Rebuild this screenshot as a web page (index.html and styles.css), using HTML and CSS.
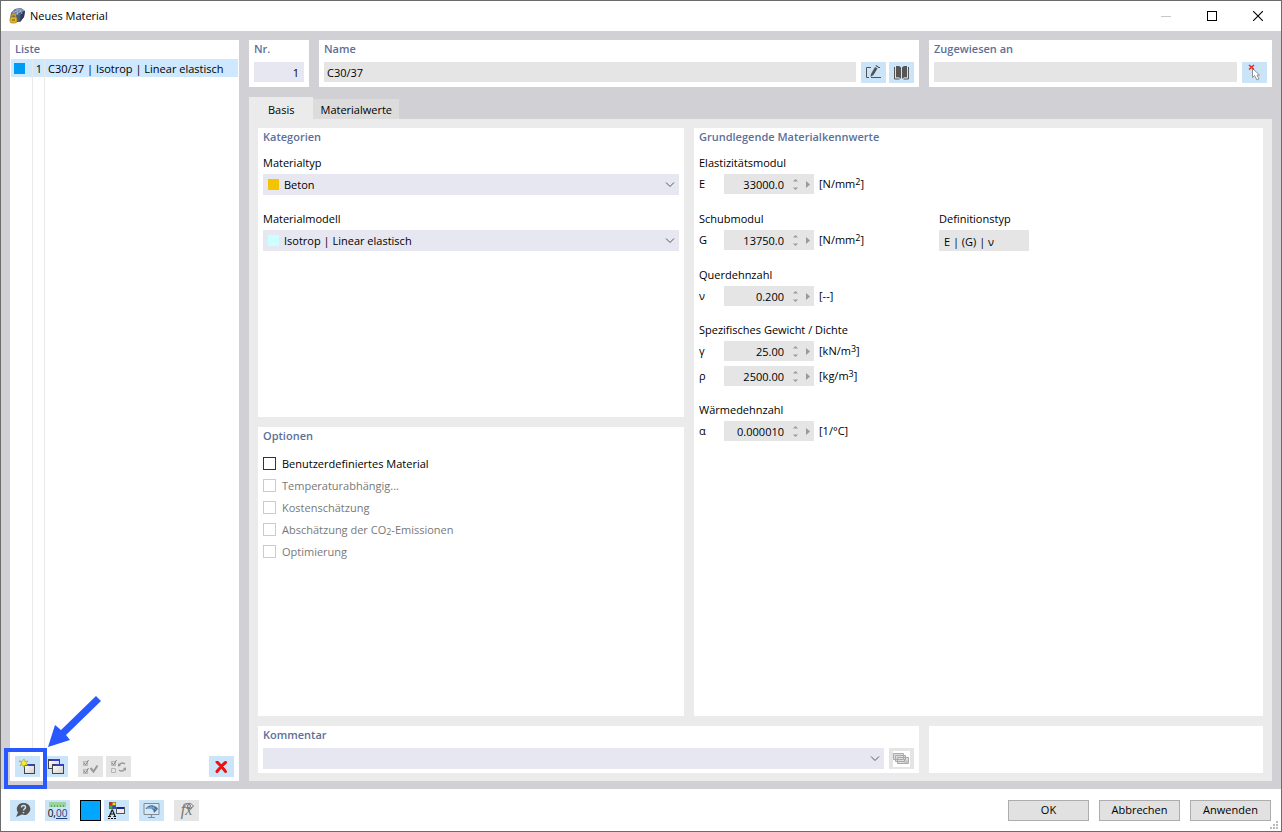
FILE: index.html
```html
<!DOCTYPE html>
<html lang="de">
<head>
<meta charset="utf-8">
<title>Neues Material</title>
<link rel="stylesheet" href="styles.css">
</head>
<body>
<div class="window">
  <header class="titlebar">
    <svg class="app-icon" width="17" height="16" viewBox="0 0 17 16">
      <path d="M2 5 L6 1 L12 0 L16 3 L15 9 L11 14 L6 14 L1 10Z" fill="#4b5c79"/>
      <path d="M6 1 L12 0 L16 3 L10 4Z" fill="#8298bb"/>
      <path d="M2 5 L6 1 L10 4 L5 8Z" fill="#6a82a6"/>
      <path d="M12 5 L16 3 L15 9 L11 14Z" fill="#2f3a52"/>
      <path d="M4 5 L9 2 M6 7 L12 3 M8 3 L9 7 M11 2 L13 6" stroke="#b4c5df" stroke-width=".8" fill="none"/>
      <path d="M2.500 10V8.500a2 2 0 0 1 4 0V10" fill="none" stroke="#c99a20" stroke-width="1.500"/>
      <rect x="1" y="9" width="7" height="6" rx="2" fill="#e3b52a" stroke="#a57c12" stroke-width=".7"/>
      <path d="M3 12h3" stroke="#69500b"/>
    </svg>
    <h1 class="window-title">Neues Material</h1>
    <div class="window-controls">
      <button class="window-button" type="button" aria-label="Minimieren" disabled><svg width="10" height="10" viewBox="0 0 10 10"><path d="M0 5.500h10" stroke="#c8c8c8"/></svg></button>
      <button class="window-button" type="button" aria-label="Maximieren"><svg width="10" height="10" viewBox="0 0 10 10"><rect x=".5" y=".5" width="9" height="9" fill="none" stroke="#000"/></svg></button>
      <button class="window-button" type="button" aria-label="Schließen"><svg width="10" height="10" viewBox="0 0 10 10"><path d="M0 0l10 10M10 0L0 10" stroke="#000" stroke-width="1.100"/></svg></button>
    </div>
  </header>

  <main class="workspace">
    <section class="list-panel">
      <h2 class="card-title">Liste</h2>
      <div class="list-body">
        <div class="list-row">
          <span class="list-color"><span class="swatch swatch-blue"></span></span>
          <span class="list-number">1</span>
          <span class="list-name">C30/37 | Isotrop | Linear elastisch</span>
        </div>
        <div class="list-space"><span class="list-line"></span><span class="list-line"></span></div>
      </div>
      <div class="list-toolbar">
        <button class="tool" type="button" aria-label="Neu">
          <svg width="17" height="17" viewBox="0 0 17 17"><defs><linearGradient id="pane" x1="0" y1="0" x2="1" y2="1"><stop offset="0" stop-color="#fff"/><stop offset="1" stop-color="#d0d0d0"/></linearGradient></defs><rect x="5.500" y="6.500" width="10" height="9" fill="url(#pane)" stroke="#444"/><path d="M5 6h11v2H5z" fill="#444"/><path d="M8 7h7" stroke="#3344ee" stroke-width="1.600"/><path d="M5 1l1 2.500 3-.5-2 2 2 2.500-3-.5-1 2.500-1-2.500-3 .5 2-2.500-3-2 3 .5z" fill="#f2f020" stroke="#8a8a30" stroke-width=".5"/></svg>
        </button>
        <button class="tool" type="button" aria-label="Kopieren">
          <svg width="17" height="17" viewBox="0 0 17 17"><rect x="1.500" y="1.500" width="11" height="9" fill="url(#pane)" stroke="#444"/><path d="M1 1h12v2H1z" fill="#444"/><path d="M5 2h7" stroke="#3344ee" stroke-width="1.600"/><rect x="5.500" y="6.500" width="11" height="9" fill="url(#pane)" stroke="#444"/><path d="M5 6h12v2H5z" fill="#444"/><path d="M9 7h7" stroke="#3344ee" stroke-width="1.600"/></svg>
        </button>
        <button class="tool tool-off tool-spaced" type="button" aria-label="Alle auswählen" disabled>
          <svg width="17" height="16" viewBox="0 0 17 16" fill="none" stroke="#888"><path d="M1.500 2.500h4v4h-4zM1.500 10.500h4v4h-4z" stroke="#b5b5b5"/><path d="M2 3.500l1.500 2.500L6.500 1M2 11.500l1.500 2.500L6.500 9"/><path d="M8.500 9l3 3.500 4-6" stroke="#999" stroke-width="2"/></svg>
        </button>
        <button class="tool tool-off" type="button" aria-label="Auswahl umkehren" disabled>
          <svg width="17" height="16" viewBox="0 0 17 16" fill="none" stroke="#888"><path d="M1.500 2.500h4v4h-4zM1.500 9.500h4v4h-4z" stroke="#b5b5b5"/><path d="M2 3.500l1.500 2.500L6.500 1"/><path d="M9 6c2-2.500 4-2.500 6-1M15 10c-2 2.500-4 2.500-6 1" stroke="#999" stroke-width="1.300"/><path d="M8 7.500V4l3 3zM16 8.500V12l-3-3z" fill="#999" stroke="none"/></svg>
        </button>
        <button class="tool tool-last" type="button" aria-label="Löschen">
          <svg width="13" height="12" viewBox="0 0 13 12"><path d="M2 1c3 3 6 6 8.500 9.500M10.500 1.500c-4 3-6 6-8.500 9" fill="none" stroke="#f01010" stroke-width="3" stroke-linecap="round"/></svg>
        </button>
      </div>
      <svg class="callout" width="98" height="96" viewBox="0 0 98 96" aria-hidden="true">
        <rect x="2" y="56" width="39" height="37" fill="none" stroke="#2958ff" stroke-width="4"/>
        <path d="M92 2l5 5-35 34 4 5-22 7 7-22 6 5z" fill="#2958ff"/>
      </svg>
    </section>

    <div class="detail">
      <div class="header-cards">
        <section class="card">
          <label class="card-title" for="nr">Nr.</label>
          <input class="field field-edit field-right" id="nr" value="1">
        </section>
        <section class="card">
          <label class="card-title" for="name">Name</label>
          <div class="field-line">
            <input class="field" id="name" value="C30/37" readonly>
            <button class="tool" type="button" aria-label="Name bearbeiten">
              <svg width="17" height="15" viewBox="0 0 17 15" fill="none" stroke="#555"><path d="M6 2.500H1.500v10H4M6 12.500h10M13 2.500h2"/><path d="M5.500 12l.5-3 4-7 2.500 1.500-4 6.500z" fill="#555" stroke="none"/><path d="M10.500 1l.500-1 2.500 1.500-.5 1z" fill="#555" stroke="none"/></svg>
            </button>
            <button class="tool" type="button" aria-label="Bibliothek">
              <svg width="17" height="14" viewBox="0 0 17 14"><path d="M3 0c2-.3 4 0 5 1.500V13c-1-1.500-3-2-5-1.500zM9 1.500c1-1.500 3-1.800 5-1.500v11.500c-2-.5-4 0-5 1.500z" fill="#555"/><path d="M1.500 1v12h5M15.500 1v12h-5" fill="none" stroke="#555"/></svg>
            </button>
          </div>
        </section>
        <section class="card">
          <label class="card-title" for="assigned">Zugewiesen an</label>
          <div class="field-line">
            <input class="field" id="assigned" value="" readonly>
            <button class="tool" type="button" aria-label="Auswählen">
              <svg width="15" height="17" viewBox="0 0 15 17"><path d="M5.500 4.500v9l2-2 2.500 4.500 2-1-2-4h2.500z" fill="#fff" stroke="#888" stroke-width=".9"/><path d="M2 1l5 4.500M7 1L2 5.500" stroke="#e42a2a" stroke-width="1.500"/></svg>
            </button>
          </div>
        </section>
      </div>

      <nav class="tabs" role="tablist">
        <button class="tab tab-active" type="button" role="tab" aria-selected="true">Basis</button>
        <button class="tab" type="button" role="tab" aria-selected="false">Materialwerte</button>
      </nav>

      <div class="tab-panel">
        <div class="columns">
          <div class="stack">
            <section class="card">
              <h2 class="card-title">Kategorien</h2>
              <div class="group">
                <label class="label" for="type">Materialtyp</label>
                <div class="select-box">
                  <select class="select" id="type"><option>Beton</option></select>
                  <span class="swatch swatch-gold select-swatch"></span>
                  <svg class="chevron" width="10" height="6" viewBox="0 0 10 6"><path d="M1 .5l4 4 4-4" fill="none" stroke="#555"/></svg>
                </div>
              </div>
              <div class="group">
                <label class="label" for="model">Materialmodell</label>
                <div class="select-box">
                  <select class="select" id="model"><option>Isotrop | Linear elastisch</option></select>
                  <span class="swatch swatch-cyan select-swatch"></span>
                  <svg class="chevron" width="10" height="6" viewBox="0 0 10 6"><path d="M1 .5l4 4 4-4" fill="none" stroke="#555"/></svg>
                </div>
              </div>
            </section>
            <section class="card">
              <h2 class="card-title">Optionen</h2>
              <div class="options">
                <label class="option"><input class="check" type="checkbox"><span>Benutzerdefiniertes Material</span></label>
                <label class="option option-off"><input class="check" type="checkbox" disabled><span>Temperaturabhängig...</span></label>
                <label class="option option-off"><input class="check" type="checkbox" disabled><span>Kostenschätzung</span></label>
                <label class="option option-off"><input class="check" type="checkbox" disabled><span>Abschätzung der CO<sub>2</sub>-Emissionen</span></label>
                <label class="option option-off"><input class="check" type="checkbox" disabled><span>Optimierung</span></label>
              </div>
            </section>
          </div>

          <section class="card">
            <h2 class="card-title">Grundlegende Materialkennwerte</h2>
            <div class="group">
              <span class="label">Elastizitätsmodul</span>
              <div class="param"><label class="symbol" for="e">E</label><span class="spin"><input class="spin-input" id="e" value="33000.0" readonly><svg class="spin-arrows" width="20" height="12" viewBox="0 0 20 12"><path d="M1 3.500L3.500 1 6 3.500zM1 9.500h5L3.500 12zM14 3v7l4-3.500z" fill="#999"/></svg></span><span>[N/mm<sup>2</sup>]</span></div>
            </div>
            <div class="group-pair">
              <div class="group">
                <span class="label">Schubmodul</span>
                <div class="param"><label class="symbol" for="g">G</label><span class="spin"><input class="spin-input" id="g" value="13750.0" readonly><svg class="spin-arrows" width="20" height="12" viewBox="0 0 20 12"><path d="M1 3.500L3.500 1 6 3.500zM1 9.500h5L3.500 12zM14 3v7l4-3.500z" fill="#999"/></svg></span><span>[N/mm<sup>2</sup>]</span></div>
              </div>
              <div class="group">
                <label class="label" for="deftype">Definitionstyp</label>
                <input class="field field-definition" id="deftype" value="E | (G) | ν" readonly>
              </div>
            </div>
            <div class="group">
              <span class="label">Querdehnzahl</span>
              <div class="param"><label class="symbol" for="nu">ν</label><span class="spin"><input class="spin-input" id="nu" value="0.200" readonly><svg class="spin-arrows" width="20" height="12" viewBox="0 0 20 12"><path d="M1 3.500L3.500 1 6 3.500zM1 9.500h5L3.500 12zM14 3v7l4-3.500z" fill="#999"/></svg></span><span>[--]</span></div>
            </div>
            <div class="group">
              <span class="label">Spezifisches Gewicht / Dichte</span>
              <div class="param"><label class="symbol" for="gamma">γ</label><span class="spin"><input class="spin-input" id="gamma" value="25.00" readonly><svg class="spin-arrows" width="20" height="12" viewBox="0 0 20 12"><path d="M1 3.500L3.500 1 6 3.500zM1 9.500h5L3.500 12zM14 3v7l4-3.500z" fill="#999"/></svg></span><span>[kN/m<sup>3</sup>]</span></div>
              <div class="param"><label class="symbol" for="rho">ρ</label><span class="spin"><input class="spin-input" id="rho" value="2500.00" readonly><svg class="spin-arrows" width="20" height="12" viewBox="0 0 20 12"><path d="M1 3.500L3.500 1 6 3.500zM1 9.500h5L3.500 12zM14 3v7l4-3.500z" fill="#999"/></svg></span><span>[kg/m<sup>3</sup>]</span></div>
            </div>
            <div class="group">
              <span class="label">Wärmedehnzahl</span>
              <div class="param"><label class="symbol" for="alpha">α</label><span class="spin"><input class="spin-input" id="alpha" value="0.000010" readonly><svg class="spin-arrows" width="20" height="12" viewBox="0 0 20 12"><path d="M1 3.500L3.500 1 6 3.500zM1 9.500h5L3.500 12zM14 3v7l4-3.500z" fill="#999"/></svg></span><span>[1/°C]</span></div>
            </div>
          </section>
        </div>

        <div class="comment-row">
          <section class="card">
            <label class="card-title" for="comment">Kommentar</label>
            <div class="field-line">
              <div class="select-box">
                <select class="select" id="comment"><option></option></select>
                <svg class="chevron" width="10" height="6" viewBox="0 0 10 6"><path d="M1 .5l4 4 4-4" fill="none" stroke="#555"/></svg>
              </div>
              <button class="tool tool-off" type="button" aria-label="Kommentare" disabled>
                <svg width="17" height="16" viewBox="0 0 17 16"><path d="M0 0h17v16H0z" fill="#fff"/><g fill="#ddd" stroke="#aaa"><path d="M.5 2.500h10v6H.5zM2.500 4.500h10v6h-10zM4.500 6.500h11v6h-11z"/><path d="M11.500 8v3h3z" fill="#fff"/></g></svg>
              </button>
            </div>
          </section>
          <section class="card"></section>
        </div>
      </div>
    </div>
  </main>

  <footer class="footer">
    <div class="footer-tools">
      <button class="tool" type="button" aria-label="Hilfe">
        <svg width="17" height="16" viewBox="0 0 17 16"><path d="M9.500 1a6 6 0 1 1-1.500 11.500L2 15l2-4.500A6 6 0 0 1 9.500 1z" fill="#555"/><path d="M7.500 5.500c0-3 4.500-2.500 4 0C11.200 7 9.500 7 9.500 8.500M9.500 10v1.300" fill="none" stroke="#cbe4f8" stroke-width="1.400"/></svg>
      </button>
      <button class="tool tool-decimals" type="button" aria-label="Einheiten und Dezimalstellen">
        <svg width="17" height="5" viewBox="0 0 17 5"><path d="M0 0h17v5H0z" fill="#9ad49c"/><path d="M2.500 3v2M5.500 3v2M8.500 3v2M11.500 3v2M14.500 3v2" stroke="#5ba35f"/></svg>
        <span class="decimals">0,<span class="decimals-places">00</span></span>
      </button>
      <button class="color-button" type="button" aria-label="Farbe"></button>
      <button class="tool tool-close" type="button" aria-label="Anzeigeeigenschaften">
        <svg width="17" height="17" viewBox="0 0 17 17"><path d="M1 0h7v7H1z" fill="#555"/><path d="M1.500.5h3v3h-3z" fill="#f21818"/><path d="M4.500.5h3v3h-3z" fill="#e9dc16"/><path d="M1.500 3.500h3v3h-3z" fill="#26b834"/><path d="M4.500 3.500h3v3h-3z" fill="#3342dd"/><path d="M1.500 14l2.500-6h.5l2.500 6M2.500 12h4M0 14.500h3M5.500 14.500H8" fill="none" stroke="#111" stroke-width="1.200"/><path d="M0 16.500h2M3 16.500h2M6 16.500h2" stroke="#111"/><rect x="8.500" y="5.500" width="8" height="6" fill="#eee" stroke="#555"/><path d="M9 6h7" stroke="#16219d" stroke-width="2"/></svg>
      </button>
      <button class="tool" type="button" aria-label="Ansicht">
        <svg width="17" height="17" viewBox="0 0 17 17"><path d="M1 1.500h15v11H1z" fill="#d5e8f7" stroke="#7e8b94"/><path d="M8.500 12.500v3M5 15.500h7" stroke="#7e8b94" stroke-width="1.200"/><path d="M2.500 7C5 2 12 2 15 7l-4 4c0-3-2-5-5-4.500z" fill="#426e9d"/><path d="M4 5.500l4 1.500M7 3.500l2 3.500M11 4l-1 3.500M4 7c3-3 7-2 9 1" fill="none" stroke="#9cbad5" stroke-width=".7"/></svg>
      </button>
      <button class="tool tool-off tool-formula" type="button" aria-label="Formeln" disabled>
        <span>fx</span>
        <svg class="formula-eye" width="10" height="8" viewBox="0 0 10 8" fill="none" stroke="#777"><path d="M.5 4C3 .5 7 .5 9.500 4 7 7.500 3 7.500.5 4z"/><circle cx="5" cy="4" r="1.500"/></svg>
      </button>
    </div>
    <div class="footer-actions">
      <button class="action" type="button">OK</button>
      <button class="action" type="button">Abbrechen</button>
      <button class="action" type="button">Anwenden</button>
    </div>
    <svg class="grip" width="8" height="8" viewBox="0 0 8 8" aria-hidden="true"><path d="M6 0h2v2H6zM3 3h2v2H3zM6 3h2v2H6zM0 6h2v2H0zM3 6h2v2H3zM6 6h2v2H6z" fill="#bbb"/></svg>
  </footer>
</div>
</body>
</html>
```

FILE: styles.css
```css
* { box-sizing: border-box; }
body {
  margin: 0;
  background: #fff;
  color: #000;
  font: 11px/16px "Open Sans", "Noto Sans", sans-serif;
}
button, input, select { font: inherit; color: inherit; border-radius: 0; }
button { padding: 0; border: 0; }
svg { display: block; flex: none; }
h1, h2 { margin: 0; }
sup, sub { font-size: 9px; line-height: 0; }
sup { vertical-align: 3px; }
sub { vertical-align: -1px; }

.window {
  display: flex;
  flex-direction: column;
  min-height: 100vh;
  border: 1px solid #6b6b6b;
}

.titlebar { display: flex; align-items: center; height: 30px; padding-left: 8px; }
.window-title { margin-left: 4px; font-size: 11px; font-weight: 400; }
.window-controls { display: flex; align-self: stretch; margin-left: auto; }
.window-button { display: grid; place-items: center; width: 46px; background: none; }

.workspace {
  display: grid;
  grid-template-columns: 229px 1fr;
  gap: 10px;
  flex: 1;
  padding: 9px 9px 8px;
  background: #d1d0d5;
}

.card-title {
  display: block;
  padding: 0 5px;
  font-size: 11px;
  font-weight: 600;
  line-height: 18px;
  color: #5d6f99;
}
.card { min-width: 0; background: #fff; }

.list-panel { position: relative; display: flex; flex-direction: column; background: #fff; }
.list-body { display: flex; flex-direction: column; flex: 1; padding: 1px 1px 0; }
.list-row, .list-space { display: grid; grid-template-columns: 22px 12px 1fr; }
.list-row { height: 18px; align-items: stretch; background: #cde8ff; line-height: 20px; }
.list-space { flex: 1; }
.list-color, .list-number, .list-line { border-right: 1px solid #e9e9e9; }
.list-color { padding: 4px 0 0 3px; }
.list-number { text-align: right; padding-right: 2px; }
.list-name { padding-left: 3px; }
.list-toolbar { display: flex; gap: 3px; padding: 8px 5px 4px; }
.callout { position: absolute; left: -6px; bottom: -9px; }

.swatch { display: block; width: 11px; height: 11px; }
.swatch-blue { background: #009bf5; }
.swatch-gold { background: #f5c400; }
.swatch-cyan { background: #ccffff; }

.tool {
  display: grid;
  place-items: center;
  flex: none;
  width: 25px;
  height: 21px;
  background: #cbe4f8;
}
.tool-off { background: #e5e5e5; }
.tool-spaced { margin-left: 7px; }
.tool-last { margin-left: auto; }

.detail { display: flex; flex-direction: column; min-width: 0; }
.header-cards { display: grid; grid-template-columns: 60px 600fr 343fr; gap: 10px; }
.header-cards .card { padding-bottom: 4px; }
.header-cards .card-title { padding-bottom: 4px; }
.field {
  display: block;
  flex: 1;
  min-width: 0;
  height: 20px;
  padding: 1px 3px 0;
  border: 0;
  background: #e5e5e5;
}
.field-edit { background: #e7e7f2; }
.field-right { width: 50px; margin: 0 5px; padding-right: 5px; text-align: right; }
.field-definition { width: 90px; height: 21px; padding: 1px 5px 0; }
.field-line { display: flex; gap: 5px; padding: 0 5px; }
.field-line .tool + .tool { margin-left: -2px; }

.tabs { display: flex; align-items: flex-end; margin-top: 10px; }
.tab { height: 20px; padding: 2px 7px 0; background: #dcdcdc; }
.tab-active { height: 22px; padding: 4px 19px 0; background: #ebebeb; }
.tab-panel {
  display: flex;
  flex-direction: column;
  gap: 10px;
  flex: 1;
  padding: 9px 9px 8px;
  background: #ebebeb;
}
.columns { display: grid; grid-template-columns: 426fr 569fr; gap: 10px; flex: 1; }
.stack { display: grid; grid-template-rows: 1fr 1fr; gap: 10px; }

.group { padding: 0 5px; margin-top: 9px; }
.group + .group, .group-pair + .group { margin-top: 16px; }
.label { display: block; margin-bottom: 3px; }
.group-pair { display: grid; grid-template-columns: 240px 1fr; margin-top: 17px; }
.group-pair .group { margin-top: 0; }

.select-box { position: relative; flex: 1; }
.select {
  display: block;
  appearance: none;
  width: 100%;
  height: 21px;
  padding: 1px 24px 0 21px;
  border: 0;
  background: #e7e7f2;
}
.select-swatch { position: absolute; left: 5px; top: 5px; }
.chevron { position: absolute; right: 4px; top: 8px; }

.options { display: grid; gap: 6px; padding: 11px 5px 0; }
.option { display: flex; align-items: flex-start; gap: 6px; }
.option-off { color: #787878; }
.check {
  appearance: none;
  width: 13px;
  height: 13px;
  margin: 1px 0 0;
  border: 1px solid #333;
  background: #fff;
}
.check:disabled { border-color: #ccc; }

.param { display: grid; grid-template-columns: 25px 90px 1fr; align-items: center; }
.param + .param { margin-top: 5px; }
.param > :last-child { padding-left: 5px; }
.spin { display: flex; align-items: center; height: 20px; background: #e5e5e5; }
.spin-input {
  flex: 1;
  min-width: 0;
  height: 20px;
  padding: 1px 0 0;
  border: 0;
  background: none;
  text-align: right;
}
.spin-arrows { margin: 0 2px 0 8px; }

.comment-row { display: grid; grid-template-columns: 661fr 334fr; gap: 10px; }
.comment-row .card { min-height: 47px; }
.comment-row .card-title { padding-bottom: 4px; }

.footer { position: relative; display: flex; align-items: center; height: 42px; padding: 0 10px 0 9px; }
.footer-tools { display: flex; gap: 10px; }
.tool-decimals { align-content: center; }
.decimals { font-size: 10px; line-height: 12px; }
.decimals-places { color: #263b7c; text-decoration: underline; }
.color-button { width: 21px; height: 21px; border: 1px solid #000; background: #00a6ff; }
.tool-close { margin-left: -7px; }
.tool-formula {
  position: relative;
  color: #777;
  font: italic 16px/18px "Liberation Serif", serif;
}
.formula-eye { position: absolute; right: 5px; top: 2px; }
.footer-actions { display: flex; gap: 10px; margin-left: auto; }
.action { width: 81px; height: 21px; border: 1px solid #adadad; background: #e1e1e1; }
.grip { position: absolute; right: 3px; bottom: 2px; }
```
